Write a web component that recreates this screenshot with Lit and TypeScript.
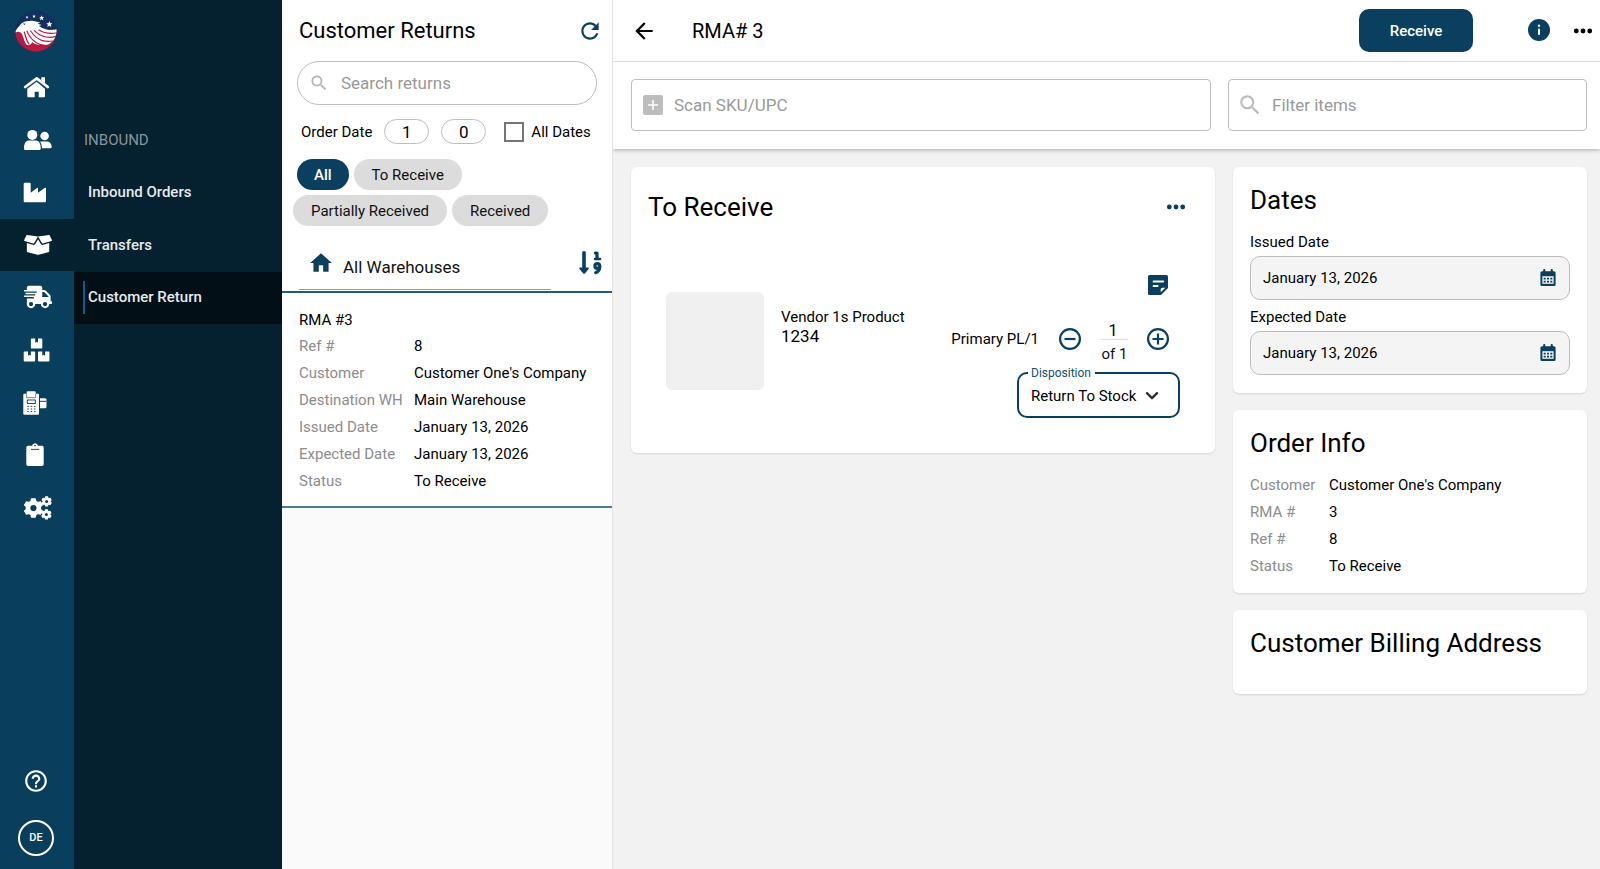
import { LitElement, html, css, svg } from "lit";
import { customElement, state } from "lit/decorators.js";
import { classMap } from "lit/directives/class-map.js";

/** Outline of a cog wheel centred on (cx, cy). */
function cog(cx: number, cy: number, outer: number, inner: number, teeth: number): string {
  const points: string[] = [];
  const step = (Math.PI * 2) / teeth;
  for (let i = 0; i < teeth; i++) {
    const a = i * step - Math.PI / 2;
    const at = (r: number, o: number) =>
      `${(cx + r * Math.cos(a + o * step)).toFixed(2)},${(cy + r * Math.sin(a + o * step)).toFixed(2)}`;
    points.push(at(inner, -0.32), at(outer, -0.2), at(outer, 0.2), at(inner, 0.32));
  }
  return points.join(" ");
}

const star = (x: number, y: number, r: number) => {
  const pts = Array.from({ length: 10 }, (_, i) => {
    const a = (i * Math.PI) / 5 - Math.PI / 2;
    const d = i % 2 ? r * 0.45 : r;
    return `${(x + d * Math.cos(a)).toFixed(1)},${(y + d * Math.sin(a)).toFixed(1)}`;
  });
  return svg`<polygon points=${pts.join(" ")} fill="#fff" />`;
};

const logo = html`<svg width="42" height="42" viewBox="0 0 126 126" aria-hidden="true">
  <defs><clipPath id="disc"><circle cx="63" cy="63" r="62" /></clipPath></defs>
  <g clip-path="url(#disc)">
    <rect width="126" height="126" fill="#11305f" />
    <path d="M0 62 L126 58 V126 H0Z" fill="#b71a41" />
    ${star(36, 22, 4.5)}${star(57, 19, 5.5)}${star(80, 24, 8)}${star(103, 43, 10)}
    <path
      d="M1 68 C2 58 8 54 14 47 C20 37 32 33 44 33 C56 31 64 36 76 37 L68 41 L80 45 L72 48 L82 54 C94 60 110 62 126 58 C125 72 122 82 116 90 C108 100 98 106 86 105 C70 106 60 104 52 97 L46 104 C42 106 38 104 36 106 C28 96 26 84 22 74 C18 66 10 62 1 68Z"
      fill="#fff"
    />
    <g fill="none" stroke="#b71a41" stroke-width="3.6" stroke-linecap="round">
      <path d="M28 66 C32 80 34 92 42 102" />
      <path d="M36 64 C42 78 50 90 64 98 C72 103 80 105 90 106" />
      <path d="M47 63 C56 76 66 86 80 91 C90 94 100 95 112 93" />
      <path d="M58 62 C68 72 80 79 94 81 C104 83 112 82 122 79" />
      <path d="M72 60 C84 68 98 72 124 69" />
    </g>
    <path d="M24 40 l8 1 -4 4z" fill="#11305f" />
  </g>
</svg>`;

const rail = (body: unknown, box = "0 0 30 24") =>
  html`<svg width="30" height="24" viewBox=${box} fill="currentColor" aria-hidden="true">${body}</svg>`;

const railItems = [
  {
    name: "Home",
    icon: rail(svg`<path d="M18.3 2.3h3.7v6l-3.7-3z" />
      <path d="M2.2 12 13.7 3.4 24.8 12" fill="none" stroke="currentColor" stroke-width="2.8" stroke-linecap="round" stroke-linejoin="round" />
      <path d="M4.3 13.7 13.6 6.8 22 13.7v7.6q0 1-1 1h-5.3v-5.6h-4v5.6H5.3q-1 0-1-1z" />`),
  },
  {
    name: "Contacts",
    icon: rail(svg`<circle cx="9.3" cy="6.9" r="5" /><circle cx="21.6" cy="8" r="4.3" />
      <path d="M1 20.4C1 15 3 12.6 6 12.6h6.600c3.200 0 5.100 2.600 5.100 7.800 0 1-.6 1.600-1.600 1.600H2.600C1.600 22 1 21.400 1 20.400z" />
      <path d="M17 13.400h6.500c3 0 5.200 2 5.200 5.600 0 .7-.5 1.200-1.200 1.200h-8.600c0-2.800-.6-5-1.900-6.800z" />`),
  },
  {
    name: "Manufacturing",
    icon: rail(svg`<path d="M1.700 2.700h5q1 0 1 1v9l6.200-4.700q1.100-.8 1.100.6v4.100l6.500-4.700q1.500-.8 1.500.6v12.700q0 1-1 1H1.700q-1 0-1-1V3.700q0-1 1-1z" />`),
  },
  {
    name: "Inbound",
    icon: rail(
      svg`<path d="M425.700 256c-16.900 0-32.800-9-41.400-23.400L320 126l-64.200 106.600c-8.700 14.500-24.600 23.500-41.500 23.500-4.500 0-9-.6-13.300-1.900L64 215v178c0 14.700 10 27.500 24.200 31l216.200 54.100c10.200 2.500 20.900 2.500 31 0L551.800 424c14.200-3.600 24.200-16.400 24.200-31V215l-137 39.100c-4.300 1.300-8.800 1.900-13.300 1.900zm212.600-112.200L586.800 41c-3.100-6.200-9.800-9.800-16.700-8.900L320 64l91.700 152.100c3.800 6.300 11.400 9.300 18.500 7.300l197.900-56.500c9.900-2.900 14.700-13.900 10.200-23.100zM53.200 41L1.700 143.800c-4.600 9.200.3 20.200 10.100 23l197.900 56.500c7.100 2 14.700-1 18.500-7.300L320 64 69.800 32.100c-6.900-.8-13.500 2.700-16.600 8.900z" />`,
      "-24 -16 686 548"
    ),
  },
  {
    name: "Outbound",
    icon: rail(
      svg`<path d="M624 352h-16V243.900c0-12.700-5.100-24.900-14.100-33.900L494 110.100c-9-9-21.200-14.100-33.900-14.100H416V48c0-26.500-21.500-48-48-48H112C85.500 0 64 21.500 64 48v48H8c-4.400 0-8 3.600-8 8v16c0 4.400 3.600 8 8 8h272c4.400 0 8 3.600 8 8v16c0 4.400-3.600 8-8 8H40c-4.400 0-8 3.600-8 8v16c0 4.400 3.600 8 8 8h208c4.400 0 8 3.600 8 8v16c0 4.400-3.600 8-8 8H8c-4.400 0-8 3.600-8 8v16c0 4.400 3.600 8 8 8h208c4.400 0 8 3.600 8 8v16c0 4.400-3.600 8-8 8H64v128c0 53 43 96 96 96s96-43 96-96h128c0 53 43 96 96 96s96-43 96-96h48c8.800 0 16-7.200 16-16v-32c0-8.800-7.200-16-16-16zM160 464c-26.500 0-48-21.500-48-48s21.500-48 48-48 48 21.500 48 48-21.500 48-48 48zm320 0c-26.500 0-48-21.500-48-48s21.500-48 48-48 48 21.500 48 48-21.500 48-48 48zm80-208H416V144h44.100l99.900 99.900V256z" />`,
      "-24 -18 686 548"
    ),
  },
  {
    name: "Inventory",
    icon: rail(
      svg`<path d="M560 288h-80v96l-32-21.300-32 21.300v-96h-80c-8.800 0-16 7.200-16 16v192c0 8.800 7.200 16 16 16h224c8.800 0 16-7.200 16-16V304c0-8.800-7.200-16-16-16zm-384-64h224c8.800 0 16-7.200 16-16V16c0-8.800-7.200-16-16-16h-80v96l-32-21.300L256 96V0h-80c-8.800 0-16 7.200-16 16v192c0 8.800 7.200 16 16 16zm64 64h-80v96l-32-21.300L96 384v-96H16c-8.800 0-16 7.200-16 16v192c0 8.800 7.200 16 16 16h224c8.800 0 16-7.200 16-16V304c0-8.800-7.200-16-16-16z" />`,
      "-16 -12 672 538"
    ),
  },
  {
    name: "Point of sale",
    icon: rail(svg`<path d="M1.300 2.700h2.400V1.300q0-1 1-1h7q1 0 1 1v1.400H15q1 0 1 1v19q0 1-1 1H1.300q-1 0-1-1v-19q0-1 1-1z" />
      <path d="M17 7.300h5q1.500 0 1.500 1.500v7q0 1.500-1.500 1.500h-5z" />
      <g stroke="#0a3e5d" fill="none">
        <path d="M3.700 3v3.700h9V3" stroke-width=".6" /><rect x="4.300" y="9" width="8" height="3.500" stroke-width=".9" />
        <path d="M4.300 15.500h1.600m1.700 0h1.600m1.700 0h1.600M4.300 18h1.600m1.700 0h1.600m1.700 0h1.600M4.300 20.500h1.600m1.700 0h1.600m1.700 0h1.600" stroke-width=".9" />
        <path d="M17 10.300h6.500" stroke-width="1" />
      </g>`),
  },
  {
    name: "Reports",
    icon: rail(svg`<path d="M5 2.800h4q.6-2.500 3-2.500t3 2.500h4q1.700 0 1.700 1.700v16.800q0 1.700-1.700 1.700H5q-1.700 0-1.700-1.700V4.500Q3.300 2.800 5 2.800z" />
      <circle cx="12" cy="2.800" r=".8" fill="#0a3e5d" /><path d="M8 6.400h8.300" stroke="#0a3e5d" stroke-width=".9" />`),
  },
  {
    name: "Settings",
    icon: rail(svg`<g stroke="currentColor" stroke-width="1.200" stroke-linejoin="round">
      <polygon points=${cog(10.4, 12, 9.3, 7.2, 6)} /><polygon points=${cog(23.6, 5.4, 4.7, 3.5, 6)} /><polygon points=${cog(23.4, 18.4, 4.7, 3.5, 6)} /></g>
      <g fill="#0a3e5d"><circle cx="10.400" cy="12" r="3.100" /><circle cx="23.600" cy="5.400" r="1.500" /><circle cx="23.400" cy="18.400" r="1.500" /></g>`),
  },
];

const material = (d: string, size: number) =>
  html`<svg width=${size} height=${size} viewBox="0 0 24 24" fill="currentColor" aria-hidden="true"><path d=${d} /></svg>`;

const SEARCH =
  "M15.5 14h-.79l-.28-.27C15.41 12.59 16 11.11 16 9.5 16 5.91 13.09 3 9.5 3S3 5.91 3 9.5 5.91 16 9.5 16c1.61 0 3.09-.59 4.23-1.57l.27.28v.79l5 4.99L20.49 19l-4.99-5zm-6 0C7.01 14 5 11.99 5 9.5S7.01 5 9.5 5 14 7.01 14 9.5 11.99 14 9.5 14z";
const HELP =
  "M11 18h2v-2h-2v2zm1-16C6.48 2 2 6.48 2 12s4.48 10 10 10 10-4.48 10-10S17.52 2 12 2zm0 18c-4.41 0-8-3.59-8-8s3.59-8 8-8 8 3.59 8 8-3.59 8-8 8zm0-14c-2.21 0-4 1.79-4 4h2c0-1.1.9-2 2-2s2 .9 2 2c0 2-3 1.75-3 5h2c0-2.25 3-2.5 3-5 0-2.21-1.79-4-4-4z";
const REFRESH =
  "M17.65 6.35C16.2 4.9 14.21 4 12 4c-4.42 0-7.99 3.58-7.99 8s3.57 8 7.99 8c3.73 0 6.84-2.55 7.73-6h-2.08c-.82 2.33-3.04 4-5.65 4-3.31 0-6-2.69-6-6s2.69-6 6-6c1.66 0 3.14.69 4.22 1.78L13 11h7V4l-2.35 2.35z";
const HOME = "M10 20v-6h4v6h5v-8h3L12 3 2 12h3v8z";
const BACK = "M20 11H7.83l5.59-5.59L12 4l-8 8 8 8 1.41-1.41L7.83 13H20v-2z";

const dots = html`<svg width="20" height="20" viewBox="0 0 20 20" fill="currentColor" aria-hidden="true">
  <circle cx="3.300" cy="10" r="2.400" /><circle cx="10" cy="10" r="2.400" /><circle cx="16.700" cy="10" r="2.400" />
</svg>`;

const sortIcon = html`<svg width="26" height="26" viewBox="0 0 26 26" fill="currentColor" aria-hidden="true">
  <path d="M4.200 2.200q0-1 1-1h1.600q1 0 1 1V17.600h2.200q1.400.1.600 1.300l-3.700 4.500q-.8.900-1.600 0l-3.800-4.500q-.7-1.200.7-1.300h2z" />
  <g fill="none" stroke="currentColor" stroke-width="3.200" stroke-linecap="round" stroke-linejoin="round">
    <path d="M17.400 3h1.600v5.600" /><path d="M17 9h5" stroke-width="2.600" /><circle cx="19.300" cy="16" r="2.400" /><path d="M21.700 16q.2 5.300-4 6.700" />
  </g>
</svg>`;

const calendar = html`<svg class="calendar" width="16" height="18" viewBox="0 0 16 18" aria-hidden="true">
  <path d="M2 2.200h1.200V.8q0-.8.8-.8h.5q.8 0 .8.800v1.400h5.400V.8q0-.8.8-.8h.5q.8 0 .8.800v1.400H14q1.600 0 1.600 1.600v11.600q0 1.600-1.600 1.600H2q-1.600 0-1.600-1.600V3.800Q.4 2.200 2 2.200z" fill="currentColor" />
  <path d="M2.400 7.200h11.200v7.600H2.400z" fill="#f4f4f4" />
  <path d="M3.700 9.600h2m1.300 0h2m1.300 0h2M3.700 12.600h2m1.300 0h2m1.300 0h2" stroke="currentColor" stroke-width="1.700" />
</svg>`;

const noteIcon = html`<svg width="20" height="20" viewBox="0 0 20 20" aria-hidden="true">
  <path d="M1.600 0h16.800Q20 0 20 1.600V13l-7 7H1.600Q0 20 0 18.400V1.600Q0 0 1.600 0z" fill="currentColor" />
  <path d="M5.600 6.400h9.600M5.600 10.900h4" stroke="#fff" stroke-width="2" stroke-linecap="round" />
  <path d="M12.700 17.200v-2.700q0-1.800 1.800-1.800h2.900z" fill="#fff" />
</svg>`;

const stepIcon = (plus: boolean) => html`<svg width="22" height="22" viewBox="0 0 22 22" fill="none" stroke="currentColor" stroke-width="2.200" aria-hidden="true">
  <circle cx="11" cy="11" r="9.900" /><path d=${plus ? "M5.500 11h11M11 5.500v11" : "M5.500 11h11"} />
</svg>`;

type Pair = [string, string];

@customElement("app-root")
export class AppRoot extends LitElement {
  @state() private filter = "All";

  private returnFields: Pair[] = [
    ["Ref #", "8"],
    ["Customer", "Customer One's Company"],
    ["Destination WH", "Main Warehouse"],
    ["Issued Date", "January 13, 2026"],
    ["Expected Date", "January 13, 2026"],
    ["Status", "To Receive"],
  ];

  private orderFields: Pair[] = [
    ["Customer", "Customer One's Company"],
    ["RMA #", "3"],
    ["Ref #", "8"],
    ["Status", "To Receive"],
  ];

  static styles = css`
    :host {
      display: flex;
      min-height: 100vh;
      font: 15px/18px Roboto, "Liberation Sans", sans-serif;
      color: #000;
      background: #f2f2f2;
      --navy: #0b3f5f;
    }
    * { box-sizing: border-box; }
    svg { display: block; flex: none; }
    button, input, select {
      font: inherit;
      color: inherit;
      margin: 0;
      padding: 0;
      border: 0;
      background: none;
      min-width: 0;
    }
    button { cursor: pointer; }
    h1, h2, h3, p, dl, dd, ul { margin: 0; padding: 0; font-weight: 400; }
    input::placeholder { color: #999; opacity: 1; }
    select { appearance: none; outline: none; }

    .rail {
      width: 74px;
      flex: none;
      display: flex;
      flex-direction: column;
      background: #0a3e5d;
      color: #fff;
    }
    .brand { height: 61px; padding: 10px 0 0 15px; }
    .rail-list { list-style: none; height: 473px; display: grid; grid-auto-rows: 1fr; }
    .rail-link {
      height: 100%;
      display: flex;
      align-items: center;
      padding-left: 23px;
      color: inherit;
    }
    .rail-link.active { background: #05202f; }
    .rail-foot {
      margin-top: auto;
      padding: 0 2px 13px 0;
      display: flex;
      flex-direction: column;
      align-items: center;
      gap: 26px;
    }
    .avatar {
      width: 36px;
      height: 36px;
      border: 2px solid #fff;
      border-radius: 50%;
      font-size: 11px;
      font-weight: 500;
    }

    .submenu { width: 208px; flex: none; background: #05202f; color: #e6eaec; padding-top: 114px; }
    .submenu-grid { height: 210px; display: grid; grid-auto-rows: 1fr; }
    .submenu h2 { font-size: 15px; line-height: 18px; color: #8a959c; padding-left: 10px; align-self: center; }
    .sub-link {
      display: flex;
      align-items: center;
      color: inherit;
      text-decoration: none;
      font-weight: 500;
      padding-left: 9px;
    }
    .sub-link span { line-height: 33px; padding-left: 3px; border-left: 2px solid transparent; }
    .sub-link.active { background: #020f17; }
    .sub-link.active span { border-color: #0f5f8e; }

    .list { width: 331px; flex: none; background: #fafafa; border-right: 1px solid #e4e4e4; }
    .list-head { background: #fff; border-bottom: 2px solid #245a78; padding-bottom: 1px; }
    .title-row { height: 61px; display: flex; align-items: center; justify-content: space-between; padding: 0 9px 0 17px; }
    .title-row h1 { font-size: 22px; line-height: 26px; }
    .title-row button, .sort { color: var(--navy); }
    .search {
      height: 44px;
      margin: 0 15px;
      border: 1px solid #bdbdbd;
      border-radius: 22px;
      display: flex;
      align-items: center;
      gap: 12px;
      padding: 0 14px 0 11px;
      color: #b3b3b3;
    }
    .search input { flex: 1; font-size: 17px; color: #000; }
    .date-row { display: flex; align-items: center; gap: 12px; margin-top: 14px; padding-left: 19px; }
    .date-row .pill {
      width: 45px;
      height: 25px;
      border: 1px solid #bdbdbd;
      border-radius: 13px;
      text-align: center;
      font-size: 17px;
    }
    .check { display: flex; align-items: center; gap: 7px; margin-left: 6px; }
    .check input { appearance: none; width: 20px; height: 20px; border: 2px solid #757575; }
    .chips { display: grid; gap: 5px; margin-top: 15px; padding-left: 11px; }
    .chip-row { display: flex; gap: 5px; }
    .chip-row:first-child { padding-left: 4px; }
    .chip { height: 31px; padding: 0 18px; border-radius: 16px; background: #dcdcdc; color: #111; }
    .chip.on { background: var(--navy); color: #fff; font-weight: 500; padding: 0 17px; }
    .warehouse { display: flex; justify-content: space-between; margin-top: 20px; padding: 0 8px 0 17px; }
    .warehouse label {
      flex: none;
      width: 252px;
      height: 44px;
      border-bottom: 1px solid #9a9a9a;
      display: flex;
      gap: 9px;
      padding: 0 0 2px 9px;
      color: var(--navy);
    }
    .warehouse label svg, .sort svg { margin-top: 4px; }
    .warehouse select { flex: 1; font-size: 17px; color: #111; }
    .sort { align-self: flex-start; }
    .entry { background: #fff; border-bottom: 2px solid #4b7a97; padding: 18px 9px 16px 17px; }
    .entry h2 { font-size: 15px; line-height: 18px; margin-bottom: 8px; }
    dl { display: grid; row-gap: 9px; white-space: nowrap; }
    .entry dl { grid-template-columns: 115px 1fr; }
    .order-fields { grid-template-columns: 79px 1fr; }
    dt { color: #8c8c8c; }

    .main { flex: 1; min-width: 0; }
    .topbar {
      height: 62px;
      background: #fff;
      border-bottom: 1px solid #dedede;
      display: flex;
      align-items: center;
      padding: 0 7px 0 18px;
    }
    .topbar h1 { font-size: 20px; line-height: 24px; margin-left: 35px; flex: 1; }
    .receive {
      width: 114px;
      height: 43px;
      border-radius: 10px;
      background: var(--navy);
      color: #fff;
      font-weight: 500;
    }
    .info { margin: 0 23px 2px 55px; color: var(--navy); }
    .toolbar {
      background: #fff;
      display: grid;
      grid-template-columns: minmax(0, 1fr) 359px;
      gap: 17px;
      padding: 17px 13px 18px 18px;
      box-shadow: 0 1px 4px rgba(0, 0, 0, 0.3);
      clip-path: inset(0 0 -8px 0);
    }
    .field {
      height: 52px;
      border: 1px solid #bdbdbd;
      border-radius: 4px;
      display: flex;
      align-items: center;
      gap: 11px;
      padding: 0 11px;
      color: #bdbdbd;
    }
    .field.filter { gap: 9px; padding: 0 8px; }
    .field input { flex: 1; font-size: 17px; color: #000; height: 100%; }
    .content {
      display: grid;
      grid-template-columns: minmax(0, 1fr) 354px;
      gap: 18px;
      align-items: start;
      padding: 18px 13px 18px 18px;
    }
    .card { background: #fff; border-radius: 6px; box-shadow: 0 1px 2px rgba(0, 0, 0, 0.12); }
    .card h2 { font-size: 26px; line-height: 30px; }
    .side { display: grid; gap: 17px; }
    .side .card { padding: 18px 17px; }
    .side h2 { margin-bottom: 18px; }
    .date-field + .date-field { margin-top: 8px; }
    .date-box {
      margin-top: 5px;
      height: 44px;
      border: 1px solid #bdbdbd;
      border-radius: 10px;
      background: #f4f4f4;
      display: flex;
      align-items: center;
      padding: 0 13px 0 12px;
      color: var(--navy);
    }
    .date-box input { flex: 1; color: #000; }

    .items-head { display: flex; align-items: center; justify-content: space-between; padding: 25px 29px 0 17px; }
    .items-head button { color: var(--navy); }
    .item { display: flex; gap: 17px; padding: 53px 35px 35px; }
    .thumb { width: 98px; height: 98px; border-radius: 6px; background: #f0f0f0; margin-top: 17px; flex: none; }
    .product { flex: 1; padding-top: 33px; }
    .product .sku { font-size: 17px; line-height: 20px; }
    .receiving { display: flex; flex-direction: column; align-items: flex-end; color: var(--navy); }
    .receiving > button { margin-right: 12px; }
    .qty { display: flex; align-items: flex-start; margin: 25px 11px 0 0; }
    .qty button { margin-top: 8px; }
    .qty > span { color: #000; margin: 10px 20px 0 0; }
    .count { width: 27px; margin: 0 19px 0 20px; text-align: center; color: #111; }
    .count input {
      display: block;
      width: 100%;
      height: 20px;
      padding-right: 3px;
      font-size: 17px;
      line-height: 18px;
      text-align: center;
      border-bottom: 1px solid #d9dde2;
      margin-bottom: 5px;
    }
    .disposition {
      width: 163px;
      margin: 3px 0 0;
      padding: 0 11px 0 12px;
      border: 2px solid var(--navy);
      border-radius: 10px;
      min-width: 0;
    }
    .disposition legend { font-size: 12px; line-height: 14px; padding: 0 4px 0 3px; margin-left: -3px; color: #174f73; }
    .disposition div { display: flex; align-items: center; height: 36px; padding-bottom: 4px; }
    .disposition select { color: #000; margin-right: 8px; }
    .disposition svg { color: #333; }
  `;

  private pairs(rows: Pair[], cls = "") {
    return html`<dl class=${cls}>${rows.map(([k, v]) => html`<dt>${k}</dt><dd>${v}</dd>`)}</dl>`;
  }

  private chip(name: string) {
    return html`<button
      class=${classMap({ chip: true, on: this.filter === name })}
      aria-pressed=${this.filter === name}
      @click=${() => (this.filter = name)}
    >${name}</button>`;
  }

  private dateField(id: string, label: string) {
    return html`<div class="date-field">
      <label for=${id}>${label}</label>
      <div class="date-box"><input id=${id} type="text" readonly value="January 13, 2026" />${calendar}</div>
    </div>`;
  }

  render() {
    return html`
      <nav class="rail" aria-label="Modules">
        <div class="brand">${logo}</div>
        <ul class="rail-list">
          ${railItems.map(
            (item) => html`<li>
              <a href="#" aria-label=${item.name} class=${classMap({ "rail-link": true, active: item.name === "Inbound" })}>${item.icon}</a>
            </li>`
          )}
        </ul>
        <div class="rail-foot">
          <button aria-label="Help">${material(HELP, 26)}</button>
          <button class="avatar">DE</button>
        </div>
      </nav>

      <nav class="submenu" aria-label="Inbound">
        <div class="submenu-grid">
          <h2>INBOUND</h2>
          <a class="sub-link" href="#"><span>Inbound Orders</span></a>
          <a class="sub-link" href="#"><span>Transfers</span></a>
          <a class="sub-link active" href="#" aria-current="page"><span>Customer Return</span></a>
        </div>
      </nav>

      <section class="list">
        <header class="list-head">
          <div class="title-row">
            <h1>Customer Returns</h1>
            <button aria-label="Refresh">${material(REFRESH, 26)}</button>
          </div>
          <div class="search">${material(SEARCH, 20)}<input type="text" aria-label="Search returns" placeholder="Search returns" /></div>
          <div class="date-row">
            <label for="from">Order Date</label>
            <input id="from" class="pill" type="text" value="1" />
            <input class="pill" type="text" aria-label="Order Date to" value="0" />
            <label class="check"><input type="checkbox" />All Dates</label>
          </div>
          <div class="chips">
            <div class="chip-row">${this.chip("All")}${this.chip("To Receive")}</div>
            <div class="chip-row">${this.chip("Partially Received")}${this.chip("Received")}</div>
          </div>
          <div class="warehouse">
            <label>${material(HOME, 26)}<select aria-label="Warehouse"><option>All Warehouses</option></select></label>
            <button class="sort" aria-label="Sort">${sortIcon}</button>
          </div>
        </header>
        <article class="entry">
          <h2>RMA #3</h2>
          ${this.pairs(this.returnFields)}
        </article>
      </section>

      <main class="main">
        <header class="topbar">
          <button aria-label="Back">${material(BACK, 26)}</button>
          <h1>RMA# 3</h1>
          <button class="receive">Receive</button>
          <button class="info" aria-label="Info">
            <svg width="22" height="22" viewBox="0 0 22 22" aria-hidden="true">
              <circle cx="11" cy="11" r="11" fill="currentColor" />
              <circle cx="11" cy="6.700" r="1.200" fill="#fff" /><rect x="10" y="9.400" width="2" height="6.600" rx=".8" fill="#fff" />
            </svg>
          </button>
          <button aria-label="More">${dots}</button>
        </header>
        <div class="toolbar">
          <div class="field">
            <svg width="20" height="20" viewBox="0 0 20 20" aria-hidden="true">
              <rect width="20" height="20" rx="2" fill="currentColor" /><path d="M5 10h10M10 5v10" stroke="#fff" stroke-width="1.600" />
            </svg>
            <input type="text" aria-label="Scan SKU/UPC" placeholder="Scan SKU/UPC" />
          </div>
          <div class="field filter">${material(SEARCH, 26)}<input type="text" aria-label="Filter items" placeholder="Filter items" /></div>
        </div>

        <div class="content">
          <section class="card">
            <div class="items-head">
              <h2>To Receive</h2>
              <button aria-label="Item actions">${dots}</button>
            </div>
            <div class="item">
              <div class="thumb"></div>
              <div class="product">
                <p>Vendor 1s Product</p>
                <p class="sku">1234</p>
              </div>
              <div class="receiving">
                <button aria-label="Note">${noteIcon}</button>
                <div class="qty">
                  <span>Primary PL/1</span>
                  <button aria-label="Decrease">${stepIcon(false)}</button>
                  <div class="count"><input type="text" aria-label="Quantity" value="1" />of 1</div>
                  <button aria-label="Increase">${stepIcon(true)}</button>
                </div>
                <fieldset class="disposition">
                  <legend>Disposition</legend>
                  <div>
                    <select aria-label="Disposition"><option>Return To Stock</option></select>
                    <svg width="14" height="10" viewBox="0 0 14 10" fill="none" stroke="currentColor" stroke-width="2.400" stroke-linecap="round" stroke-linejoin="round" aria-hidden="true">
                      <path d="M2 2.200 7 7.200 12 2.200" />
                    </svg>
                  </div>
                </fieldset>
              </div>
            </div>
          </section>

          <aside class="side">
            <section class="card">
              <h2>Dates</h2>
              ${this.dateField("issued", "Issued Date")}${this.dateField("expected", "Expected Date")}
            </section>
            <section class="card">
              <h2>Order Info</h2>
              ${this.pairs(this.orderFields, "order-fields")}
            </section>
            <section class="card"><h2>Customer Billing Address</h2></section>
          </aside>
        </div>
      </main>
    `;
  }
}
